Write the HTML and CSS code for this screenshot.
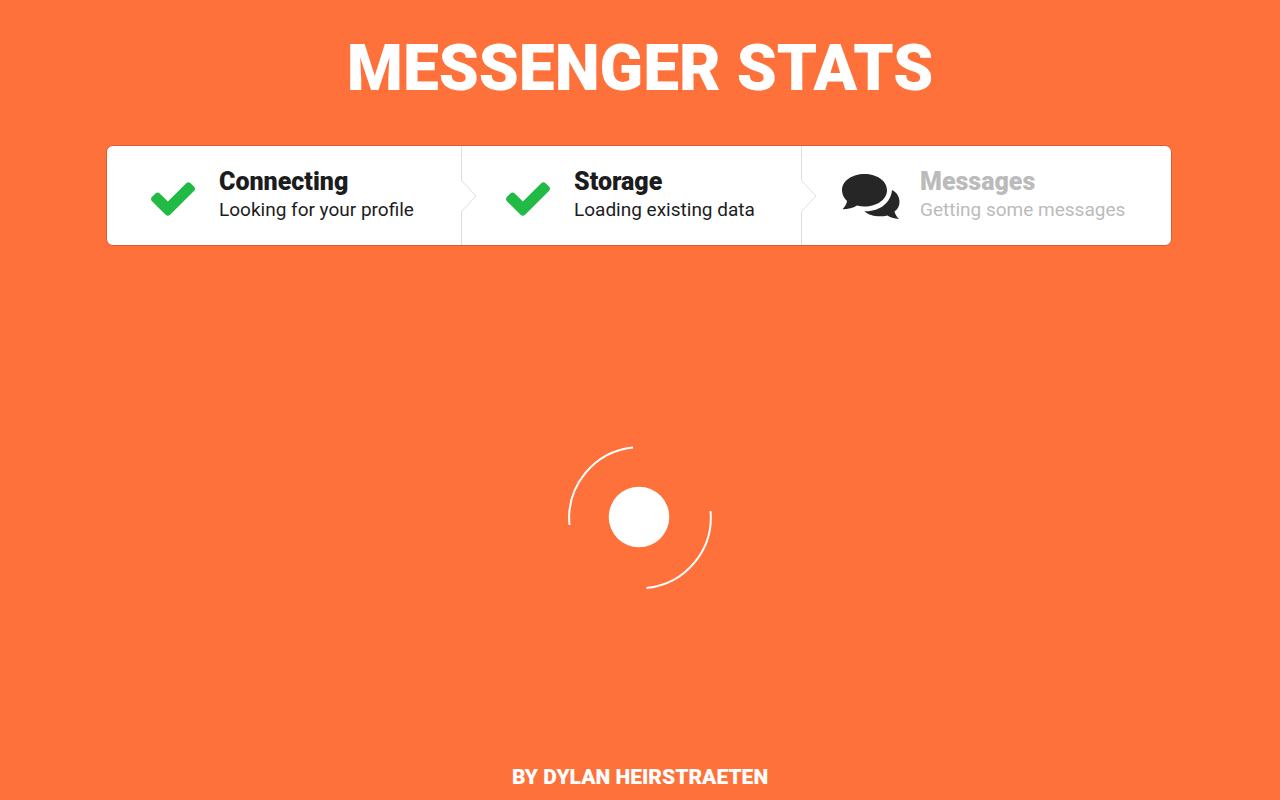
FILE: index.html
```html
<!DOCTYPE html>
<html lang="en">
<head>
<meta charset="utf-8">
<title>Messenger Stats</title>
<link rel="stylesheet" href="styles.css">
</head>
<body>
<h1 class="title">MESSENGER STATS</h1>
<ol class="steps">
  <li class="step step-connecting">
    <svg class="icon-check" viewBox="121 334 1550 1188" aria-hidden="true"><path d="M1671 566q0 40-28 68l-724 724-136 136q-28 28-68 28t-68-28l-136-136-362-362q-28-28-28-68t28-68l136-136q28-28 68-28t68 28l294 295 656-657q28-28 68-28t68 28l136 136q28 28 28 68z"/></svg>
    <div class="content"><h2 class="name">Connecting</h2><p class="text">Looking for your profile</p></div>
    <svg class="arrow" viewBox="0 0 17 32" aria-hidden="true"><path d="M1 0L16 16L1 32"/></svg>
  </li>
  <li class="step step-storage">
    <svg class="icon-check" viewBox="121 334 1550 1188" aria-hidden="true"><path d="M1671 566q0 40-28 68l-724 724-136 136q-28 28-68 28t-68-28l-136-136-362-362q-28-28-28-68t28-68l136-136q28-28 68-28t68 28l294 295 656-657q28-28 68-28t68 28l136 136q28 28 28 68z"/></svg>
    <div class="content"><h2 class="name">Storage</h2><p class="text">Loading existing data</p></div>
    <svg class="arrow" viewBox="0 0 17 32" aria-hidden="true"><path d="M1 0L16 16L1 32"/></svg>
  </li>
  <li class="step step-messages">
    <svg class="icon-comments" viewBox="0 0 58 45" aria-hidden="true"><path d="M22.500 0C35 0 45 7 45 16.200S35 32.500 22.500 32.500C20 32.500 17.500 32.200 15 31.600C11 34.200 6 35.200 .5 35.200C3 32.500 4.500 30 5 27C2 24 0 20.500 0 16.200C0 7 10 0 22.500 0Z"/><path d="M50 16C55 18.500 57.500 23 57.500 28C57.500 32 55.500 35.500 52.500 37.500C53 40 54.500 42.500 57 45C52 44.600 48 43.500 45.500 41.500C37 43.500 27.500 42 22.500 37.200C37 38 49 29 50 16Z"/></svg>
    <div class="content"><h2 class="name">Messages</h2><p class="text">Getting some messages</p></div>
  </li>
</ol>
<main class="loading">
  <svg class="loader" viewBox="0 0 144 144" role="img" aria-label="Loading"><circle cx="71" cy="72" r="30.300"/><path d="M1.500 80A71 71 0 0 1 65 2.500M142.500 66A71 71 0 0 1 78.500 143"/></svg>
</main>
<footer class="credit">BY DYLAN HEIRSTRAETEN</footer>
</body>
</html>
```
FILE: styles.css
```css
* { box-sizing: border-box; }
body {
  margin: 0;
  min-height: 100vh;
  display: flex;
  flex-direction: column;
  align-items: center;
  background: #ff713b;
  color: #1b1c1d;
  font-family: Roboto, "Open Sans", sans-serif;
}
.title {
  margin: 33px 0 40px;
  color: #fff;
  font-size: 64px;
  line-height: 72px;
  font-weight: 900;
  text-align: center;
}
.steps {
  display: flex;
  width: calc(100% - 214px);
  min-height: 101px;
  margin: 0 2px 0 0;
  padding: 0;
  list-style: none;
  background: #fff;
  border: 1px solid #d95e31;
  border-radius: 7px;
}
.step {
  position: relative;
  display: flex;
  align-items: center;
  gap: 24px;
  padding-left: 44px;
  border-right: 1px solid #dededf;
}
.step:last-child { border-right: 0; gap: 20px; padding-left: 40px; }
.step-connecting { flex: 310; }
.step-storage { flex: 295; }
.step-messages { flex: 329; }
.icon-check { width: 44px; height: 34px; margin-top: 6px; fill: #21ba45; }
.icon-comments { width: 58px; height: 45px; margin-top: 2px; fill: #262626; }
.name { margin: 0; font-size: 25px; line-height: 28px; font-weight: 900; }
.text { margin: 0; font-size: 19px; line-height: 28px; white-space: nowrap; }
.step-messages .content { color: #bbb; }
.arrow {
  position: absolute;
  z-index: 1;
  top: calc(50% - 16px);
  right: -16px;
  width: 17px;
  height: 32px;
  fill: #fff;
  stroke: #dededf;
}
.loading {
  flex: 1;
  display: flex;
  align-items: center;
  padding-top: 23px;
}
.loader { width: 144px; height: 144px; fill: #fff; }
.loader path { fill: none; stroke: #fff; stroke-width: 2; }
.credit {
  padding-bottom: 11px;
  color: #fff;
  font-size: 21px;
  line-height: 24px;
  font-weight: 900;
}
```
